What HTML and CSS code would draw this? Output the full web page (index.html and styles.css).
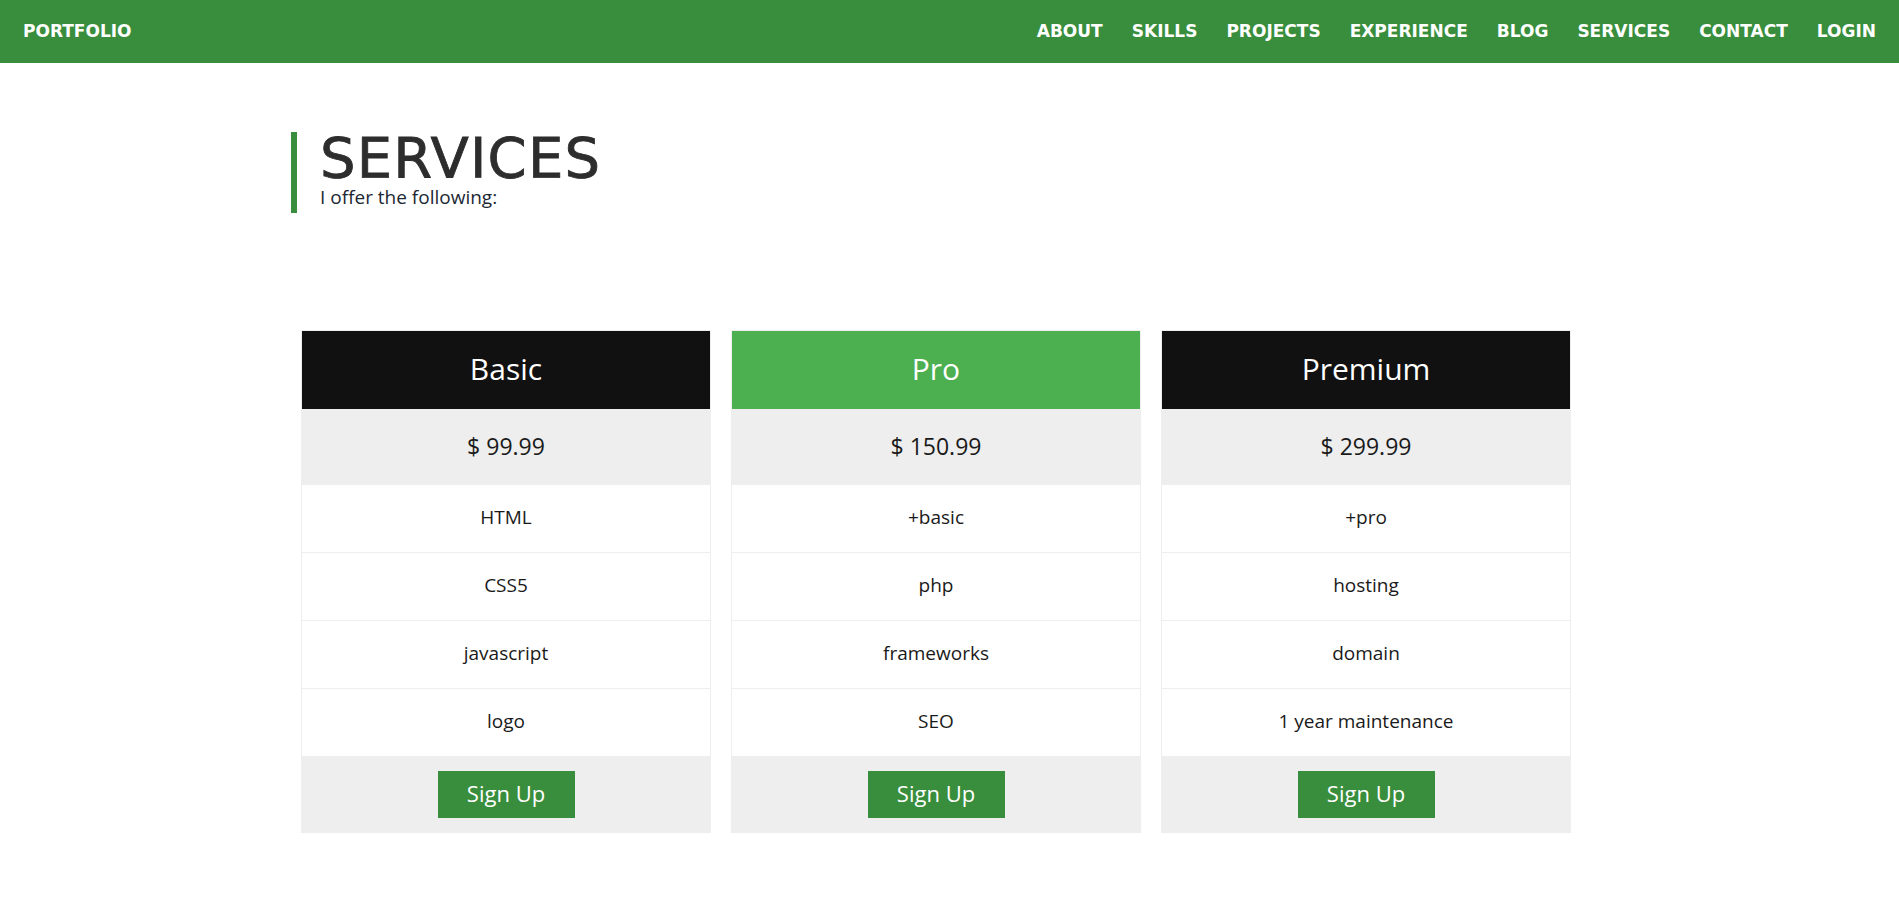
FILE: index.html
```html
<!DOCTYPE html>
<html lang="en">
<head>
<meta charset="utf-8">
<title>Portfolio - Services</title>
<link rel="stylesheet" href="styles.css">
</head>
<body>
<header class="navbar">
  <a class="brand" href="#">PORTFOLIO</a>
  <nav class="menu">
    <a href="#">ABOUT</a>
    <a href="#">SKILLS</a>
    <a href="#">PROJECTS</a>
    <a href="#">EXPERIENCE</a>
    <a href="#">BLOG</a>
    <a href="#">SERVICES</a>
    <a href="#">CONTACT</a>
    <a href="#">LOGIN</a>
  </nav>
</header>

<main class="container">
  <div class="section-title">
    <h1>SERVICES</h1>
    <p>I offer the following:</p>
  </div>

  <section class="plans">
    <ul class="plan">
      <li class="plan-head">Basic</li>
      <li class="plan-price">$ 99.99</li>
      <li class="plan-item">HTML</li>
      <li class="plan-item">CSS5</li>
      <li class="plan-item">javascript</li>
      <li class="plan-item">logo</li>
      <li class="plan-foot"><a class="btn" href="#">Sign Up</a></li>
    </ul>
    <ul class="plan">
      <li class="plan-head plan-head-featured">Pro</li>
      <li class="plan-price">$ 150.99</li>
      <li class="plan-item">+basic</li>
      <li class="plan-item">php</li>
      <li class="plan-item">frameworks</li>
      <li class="plan-item">SEO</li>
      <li class="plan-foot"><a class="btn" href="#">Sign Up</a></li>
    </ul>
    <ul class="plan">
      <li class="plan-head">Premium</li>
      <li class="plan-price">$ 299.99</li>
      <li class="plan-item">+pro</li>
      <li class="plan-item">hosting</li>
      <li class="plan-item">domain</li>
      <li class="plan-item">1 year maintenance</li>
      <li class="plan-foot"><a class="btn" href="#">Sign Up</a></li>
    </ul>
  </section>
</main>
</body>
</html>
```

FILE: styles.css
```css
* {
  box-sizing: border-box;
}

body {
  margin: 0;
  background: #ffffff;
  font-family: "Open Sans", "Liberation Sans", sans-serif;
  color: #222222;
}

a {
  text-decoration: none;
}

.navbar {
  height: 63px;
  background: #388e3c;
  display: flex;
  align-items: center;
  justify-content: space-between;
  padding: 0 23px 2px 23px;
}

.brand,
.menu a {
  font-family: "DejaVu Sans", "Liberation Sans", sans-serif;
  font-weight: bold;
  font-size: 17px;
  color: #ffffff;
}

.menu {
  display: flex;
  gap: 29px;
}

.container {
  width: 1317px;
  margin: 0 auto;
  padding-top: 69px;
}

.section-title {
  border-left: 6px solid #388e3c;
  padding: 0 0 3px 23px;
}

.section-title h1 {
  margin: 0;
  font-family: "DejaVu Sans", "Liberation Sans", sans-serif;
  font-weight: normal;
  font-size: 56px;
  line-height: 52px;
  letter-spacing: 1.2px;
  color: #2d2d2d;
  -webkit-text-stroke: 0.8px #2d2d2d;
}

.section-title p {
  margin: 0;
  font-size: 19px;
  line-height: 26px;
  color: #1c2833;
}

.plans {
  display: flex;
  gap: 20px;
  margin-top: 117px;
  padding-left: 10px;
}

.plan {
  list-style: none;
  margin: 0;
  padding: 0;
  width: 410px;
  border: 1px solid #eeeeee;
}

.plan li {
  display: flex;
  align-items: center;
  justify-content: center;
  border-bottom: 1px solid #eeeeee;
  padding-bottom: 3px;
  text-align: center;
}

.plan-head {
  height: 79px;
  background: #111111;
  color: #ffffff;
  font-size: 30px;
}

.plan-head-featured {
  background: #4caf50;
}

.plan-price {
  height: 75px;
  background: #eeeeee;
  font-size: 23px;
  color: #1a1a1a;
}

.plan-item {
  height: 68px;
  background: #ffffff;
  font-size: 19px;
  color: #1a1a1a;
}

.plan .plan-foot {
  height: 75px;
  padding-bottom: 1px;
  background: #eeeeee;
  border-bottom: none;
}

.btn {
  display: flex;
  align-items: center;
  justify-content: center;
  width: 137px;
  height: 47px;
  padding-bottom: 2px;
  background: #388e3c;
  color: #ffffff;
  font-size: 22px;
}
```
